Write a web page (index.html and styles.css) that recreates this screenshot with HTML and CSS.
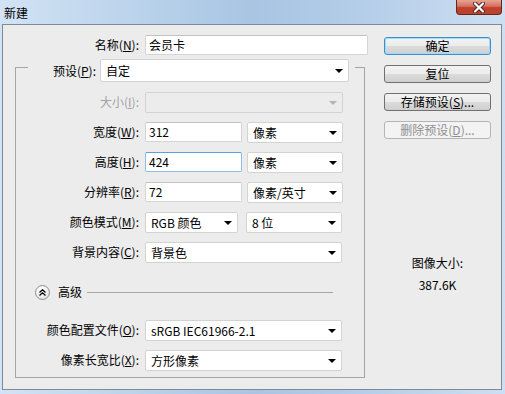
FILE: index.html
```html
<!DOCTYPE html>
<html lang="zh-CN">
<head>
  <meta charset="UTF-8">
  <title>新建</title>
  <link rel="stylesheet" href="styles.css">
</head>
<body>
  <div class="window">
    <div class="titlebar">
      <span class="title">新建</span>
      <div class="close">
        <svg width="14" height="11" viewBox="0 0 14 11">
          <path d="M3 1.5 L11 9.5 M11 1.5 L3 9.5" stroke="#4a2a26" stroke-width="4" stroke-linecap="round"/>
          <path d="M3 1.5 L11 9.5 M11 1.5 L3 9.5" stroke="#fff" stroke-width="2.2" stroke-linecap="round"/>
        </svg>
      </div>
    </div>

    <div class="client">
      <div class="form-col">
        <div class="name-row">
          <label>名称(<u>N</u>):</label>
          <div class="field name-field">会员卡</div>
        </div>

        <div class="group">
          <div class="group-head">
            <span class="edge-l"></span>
            <label class="preset-label">预设(<u>P</u>):</label>
            <div class="select preset-select">自定</div>
            <span class="edge-r"></span>
          </div>

          <div class="group-body">
            <div class="row">
              <label class="disabled">大小(<u>I</u>):</label>
              <div class="select select-off w-full2"></div>
            </div>
            <div class="row">
              <label>宽度(<u>W</u>):</label>
              <div class="field w-num">312</div>
              <div class="select w-unit">像素</div>
            </div>
            <div class="row">
              <label>高度(<u>H</u>):</label>
              <div class="field field-focus w-num">424</div>
              <div class="select w-unit">像素</div>
            </div>
            <div class="row">
              <label>分辨率(<u>R</u>):</label>
              <div class="field w-num">72</div>
              <div class="select w-unit">像素/英寸</div>
            </div>
            <div class="row">
              <label>颜色模式(<u>M</u>):</label>
              <div class="select w-mode">RGB 颜色</div>
              <div class="select w-unit bits">8 位</div>
            </div>
            <div class="row">
              <label>背景内容(<u>C</u>):</label>
              <div class="select w-full">背景色</div>
            </div>

            <div class="advanced">
              <span class="toggle">
                <svg width="7" height="7" viewBox="0 0 7 7">
                  <path d="M0.5 3.5 L3.5 0.8 L6.5 3.5 M0.5 6.5 L3.5 3.8 L6.5 6.5" fill="none" stroke="#000" stroke-width="1.3"/>
                </svg>
              </span>
              <span class="adv-text">高级</span>
              <span class="adv-line"></span>
            </div>

            <div class="row row-adv">
              <label>颜色配置文件(<u>O</u>):</label>
              <div class="select w-full">sRGB IEC61966-2.1</div>
            </div>
            <div class="row">
              <label>像素长宽比(<u>X</u>):</label>
              <div class="select w-full">方形像素</div>
            </div>
          </div>
        </div>
      </div>

      <div class="side-col">
        <div class="btn btn-default">确定</div>
        <div class="btn">复位</div>
        <div class="btn">存储预设(<u>S</u>)...</div>
        <div class="btn btn-off">删除预设(<u>D</u>)...</div>
        <div class="size-label">图像大小:</div>
        <div class="size-value">387.6K</div>
      </div>
    </div>
  </div>
</body>
</html>
```

FILE: styles.css
```css
body {
  margin: 0;
  font-family: "Noto Sans CJK SC", "Noto Sans", sans-serif;
  font-size: 12px;
  color: #000;
  background: #fff;
}

.window {
  width: 505px;
  height: 394px;
  overflow: hidden;
  background: linear-gradient(90deg, #d2e3f4 0%, #bcd4ec 25%, #a9c5e3 50%, #b3cce8 70%, #cddff1 100%);
}

.titlebar {
  height: 24px;
  display: flex;
  justify-content: space-between;
  align-items: flex-start;
}

.title {
  padding: 5px 0 0 4px;
  line-height: 16px;
  font-size: 12px;
}

.close {
  width: 46px;
  height: 15px;
  margin-right: 3px;
  box-sizing: border-box;
  border: 1px solid #6b2418;
  border-top: none;
  border-radius: 0 0 4px 4px;
  background: linear-gradient(#e6a593 0%, #d5715e 45%, #c13f2b 55%, #b8442f 100%);
  display: flex;
  justify-content: center;
  align-items: center;
}

.client {
  height: 366px;
  margin: 0 3px 0 2px;
  box-sizing: border-box;
  border: 1px solid #7d8a98;
  background: #ececec;
  display: flex;
}

.form-col {
  width: 381px;
}

label {
  line-height: 16px;
  white-space: nowrap;
}

.name-row {
  display: flex;
  align-items: center;
  height: 20px;
  margin-top: 10px;
}

.name-row label {
  width: 136px;
  text-align: right;
  margin-right: 6px;
}

.field {
  height: 20px;
  box-sizing: border-box;
  border: 1px solid #d5d5d5;
  border-top-color: #c2c2c2;
  border-radius: 2px;
  background: #fff;
  padding: 0 3px;
  line-height: 18px;
}

.field-focus {
  border-color: #8ebde8;
  border-top-color: #5c9fdc;
}

.name-field {
  width: 223px;
}

.select {
  height: 21px;
  box-sizing: border-box;
  border: 1px solid #d3d3d3;
  border-radius: 2px;
  background: #fff;
  padding: 0 5px;
  line-height: 19px;
  display: flex;
  align-items: center;
  white-space: nowrap;
}

.select::after {
  content: "";
  margin-left: auto;
  border-left: 4px solid transparent;
  border-right: 4px solid transparent;
  border-top: 4px solid #000;
  margin-top: 1px;
}

.select-off {
  background: #ececec;
}

.select-off::after {
  border-top-color: #b4b4b4;
}

.group {
  width: 350px;
  margin: 4px 0 0 12px;
}

.group-head {
  display: flex;
  align-items: flex-start;
  height: 24px;
}

.edge-l,
.edge-r {
  margin-top: 8px;
  height: 16px;
  box-sizing: border-box;
  border-top: 1px solid #a5a5a5;
}

.edge-l {
  width: 13px;
  border-left: 1px solid #a5a5a5;
}

.edge-r {
  width: 10px;
  margin-left: 6px;
  border-right: 1px solid #a5a5a5;
}

.preset-label {
  width: 68px;
  text-align: right;
  margin: 4px 4px 0 0;
}

.preset-select {
  width: 249px;
  height: 23px;
  line-height: 21px;
}

.group-body {
  border: 1px solid #a5a5a5;
  border-top: none;
  padding: 4px 0 2px;
}

.row {
  display: flex;
  align-items: center;
  height: 30px;
}

.row label {
  width: 123px;
  text-align: right;
  margin-right: 6px;
}

.disabled {
  color: #a3a3a3;
}

.w-num {
  width: 97px;
  margin-right: 5px;
}

.w-unit {
  width: 96px;
}

.w-mode {
  width: 93px;
  margin-right: 8px;
}

.w-full {
  width: 197px;
}

.w-full2 {
  width: 198px;
}

.advanced {
  display: flex;
  align-items: center;
  height: 30px;
  margin-top: 10px;
  padding-left: 19px;
}

.toggle {
  width: 15px;
  height: 15px;
  box-sizing: border-box;
  border: 1px solid #8f8f8f;
  border-radius: 50%;
  background: radial-gradient(circle at 40% 35%, #ffffff 0%, #f1f1f1 50%, #cfcfcf 100%);
  display: flex;
  justify-content: center;
  align-items: center;
}

.adv-text {
  margin-left: 8px;
  line-height: 16px;
}

.adv-line {
  flex: 1;
  height: 1px;
  margin: 0 31px 0 5px;
  background: #a5a5a5;
}

.row-adv {
  margin-top: 8px;
}

.side-col {
  width: 107px;
  padding-top: 12px;
  display: flex;
  flex-direction: column;
}

.btn {
  height: 18px;
  box-sizing: border-box;
  border: 1px solid #707070;
  border-radius: 3px;
  background: linear-gradient(#f3f3f3 0%, #ebebeb 50%, #dcdcdc 50%, #cfcfcf 100%);
  text-align: center;
  line-height: 16px;
  margin-bottom: 10px;
  white-space: nowrap;
}

.btn-default {
  border-color: #3c8ed3;
  box-shadow: inset 0 0 0 1px #9fdcf8;
}

.btn-off {
  border-color: #b2b6b9;
  background: #f3f3f3;
  color: #8f8f8f;
}

.size-label,
.size-value {
  text-align: center;
  line-height: 16px;
}

.size-label {
  margin-top: 106px;
}

.size-value {
  margin-top: 6px;
}
```
